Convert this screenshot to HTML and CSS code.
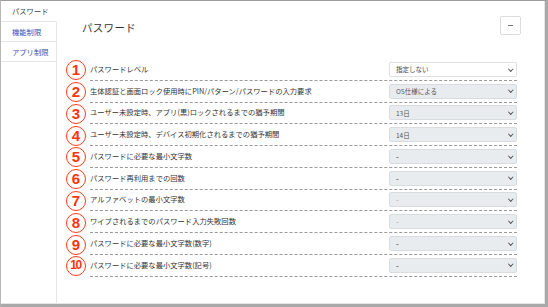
FILE: index.html
```html
<!DOCTYPE html>
<html lang="ja">
<head>
<meta charset="utf-8">
<link rel="stylesheet" href="styles.css">
</head>
<body>
<div class="frame">
  <nav class="side">
    <div class="tab active">パスワード</div>
    <div class="tab link">機能制限</div>
    <div class="tab link">アプリ制限</div>
    <div class="side-rest"></div>
  </nav>
  <main class="main">
    <div class="head">
      <h1 class="title">パスワード</h1>
      <button class="collapse"><span></span></button>
    </div>
    <div class="rows">
      <div class="row"><span class="num">1</span><div class="cell"><span class="label">パスワードレベル</span><div class="sel white"><span>指定しない</span><i></i></div></div></div>
      <div class="row"><span class="num">2</span><div class="cell"><span class="label">生体認証と画面ロック使用時にPIN/パターン/パスワードの入力要求</span><div class="sel"><span>OS仕様による</span><i></i></div></div></div>
      <div class="row"><span class="num">3</span><div class="cell"><span class="label">ユーザー未設定時、アプリ(黒)ロックされるまでの猶予期間</span><div class="sel"><span>13日</span><i></i></div></div></div>
      <div class="row"><span class="num">4</span><div class="cell"><span class="label">ユーザー未設定時、デバイス初期化されるまでの猶予期間</span><div class="sel"><span>14日</span><i></i></div></div></div>
      <div class="row"><span class="num">5</span><div class="cell"><span class="label">パスワードに必要な最小文字数</span><div class="sel"><span class="dash">-</span><i></i></div></div></div>
      <div class="row"><span class="num">6</span><div class="cell"><span class="label">パスワード再利用までの回数</span><div class="sel"><span class="dash">-</span><i></i></div></div></div>
      <div class="row"><span class="num">7</span><div class="cell"><span class="label">アルファベットの最小文字数</span><div class="sel dim"><span class="dash">-</span><i></i></div></div></div>
      <div class="row"><span class="num">8</span><div class="cell"><span class="label">ワイプされるまでのパスワード入力失敗回数</span><div class="sel dim"><span class="dash">-</span><i></i></div></div></div>
      <div class="row"><span class="num">9</span><div class="cell"><span class="label">パスワードに必要な最小文字数(数字)</span><div class="sel"><span class="dash">-</span><i></i></div></div></div>
      <div class="row"><span class="num ten">10</span><div class="cell"><span class="label">パスワードに必要な最小文字数(記号)</span><div class="sel"><span class="dash">-</span><i></i></div></div></div>
    </div>
  </main>
</div>
</body>
</html>
```

FILE: styles.css
```css
* { box-sizing: border-box; }
html, body { margin: 0; padding: 0; background: #fff; }
body { font-family: "Noto Sans CJK JP", "Noto Sans", sans-serif; color: #333; }

.frame {
  width: 548px;
  height: 307px;
  display: flex;
  border-top: 1px solid #9c9c9c;
  border-left: 1px solid #b8b8b8;
  border-right: 3px solid #a9a9a9;
  border-bottom: 3px solid #a9a9a9;
  box-shadow: inset -1px -1px 0 #e6e6e6;
  overflow: hidden;
}

.side {
  width: 56px;
  flex: none;
  display: flex;
  flex-direction: column;
}
.tab {
  height: 20px;
  font-size: 7.3px;
  line-height: 20px;
  padding-left: 11px;
  border-bottom: 1px solid #e6e6e6;
  border-right: 1px solid #e6e6e6;
  white-space: nowrap;
}
.tab.active { height: 21px; border-right-color: transparent; color: #444; }
.tab.link { color: #3d4fb0; }
.side-rest { flex: 1; border-right: 1px solid #e6e6e6; }

.main {
  flex: 1;
  padding: 14px 24px 0 9px;
}
.head {
  display: flex;
  justify-content: space-between;
  align-items: flex-start;
  padding-left: 16px;
}
.title {
  margin: 5px 0 0;
  font-size: 10.5px;
  font-weight: normal;
  color: #333;
  letter-spacing: 0.3px;
}
.collapse {
  width: 21px;
  height: 19px;
  margin: 1px 0 0;
  padding: 0;
  background: #fff;
  border: 1px solid #dcdcdc;
  border-radius: 2px;
  display: flex;
  align-items: center;
  justify-content: center;
}
.collapse span { width: 5px; height: 1px; background: #777; }

.rows {
  margin-top: 24px;
  display: flex;
  flex-direction: column;
  padding-right: 4px;
}
.row {
  height: 21.78px;
  display: flex;
  align-items: center;
  gap: 4px;
}
.num {
  width: 20px;
  height: 20px;
  flex: none;
  border: 1.5px solid #ff3a1a;
  border-radius: 50%;
  color: #ff3311;
  font-family: "Liberation Sans", Arial, sans-serif;
  font-weight: bold;
  font-size: 15px;
  line-height: 17px;
  text-align: center;
  margin-top: 1px;
}
.num.ten { font-size: 12px; letter-spacing: -1.5px; padding-right: 1px; }
.cell {
  flex: 1;
  height: 100%;
  display: flex;
  align-items: flex-end;
  padding-bottom: 3px;
  border-bottom: 1px dashed #9a9a9a;
}
.label {
  flex: 1;
  font-size: 7.3px;
  line-height: 15px;
  color: #333;
  white-space: nowrap;
}
.sel {
  width: 128px;
  height: 15px;
  flex: none;
  background: #e9ecef;
  border: 1px solid #d8dce0;
  border-radius: 2px;
  display: flex;
  align-items: center;
  justify-content: space-between;
  padding: 0 4px 0 6px;
  font-size: 6.5px;
  color: #555;
}
.sel.white { background: #fff; border-color: #e0e0e0; color: #444; }
.sel .dash { font-family: "Liberation Sans", Arial, sans-serif; font-size: 8px; color: #333; }
.sel.dim .dash { color: #aaa; }
.sel i {
  width: 3.5px;
  height: 3.5px;
  border-right: 1px solid #555;
  border-bottom: 1px solid #555;
  transform: rotate(45deg);
  margin-top: -2px;
}
```
